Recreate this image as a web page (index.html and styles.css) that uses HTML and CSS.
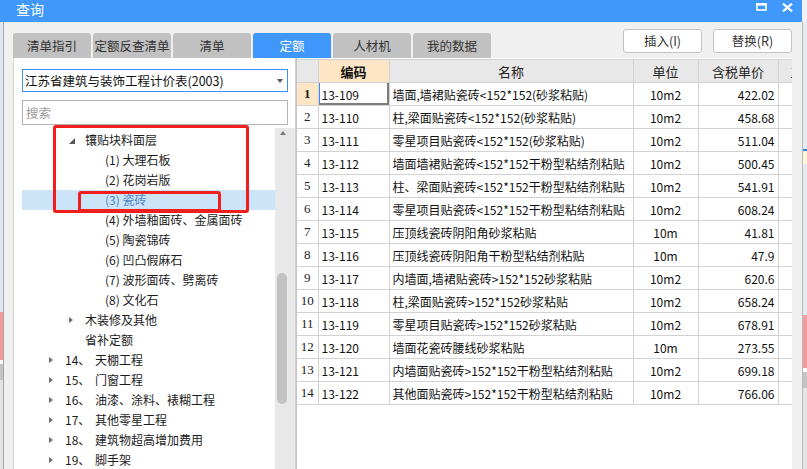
FILE: index.html
```html
<!DOCTYPE html>
<html lang="zh">
<head>
<meta charset="utf-8">
<title>查询</title>
<link rel="stylesheet" href="styles.css">
</head>
<body>
<div class="screen">
  <div class="titlerow">
    <div class="titlebar">
      <span class="title">查询</span>
      <div class="winbtns">
        <svg class="ico" width="11" height="8" viewBox="0 0 11 8"><rect x="1" y="1" width="9" height="6" fill="none" stroke="#fff" stroke-width="1.6"/><rect x="0.2" y="0.2" width="10.6" height="2.4" fill="#fff"/></svg>
        <svg class="ico" width="11" height="9" viewBox="0 0 11 9"><path d="M1 0.6 L10 8.4 M10 0.6 L1 8.4" stroke="#fff" stroke-width="2.1" fill="none"/></svg>
      </div>
    </div>
    <div class="corner"></div>
  </div>
  <div class="mainrow">
    <div class="strip strip-left">
      <div class="s-blue"></div>
      <div class="s-pink"></div>
      <div class="s-white"></div>
      <div class="s-gray"></div>
      <div class="s-rest"></div>
    </div>
    <div class="window">
      <div class="toolbar">
        <div class="tabs">
          <div class="tab">清单指引</div>
          <div class="tab">定额反查清单</div>
          <div class="tab">清单</div>
          <div class="tab active">定额</div>
          <div class="tab">人材机</div>
          <div class="tab">我的数据</div>
        </div>
        <div class="btns">
          <div class="btn">插入(I)</div>
          <div class="btn">替换(R)</div>
        </div>
      </div>
      <div class="content">
        <div class="leftpanel">
          <div class="dropdown"><span>江苏省建筑与装饰工程计价表(2003)</span><i class="dd-arrow"></i></div>
          <div class="search">搜索</div>
          <div class="treearea">
            <div class="treelist">
              <div class="row l2"><i class="tg"><b class="exp"></b></i><span>镶贴块料面层</span></div>
              <div class="row l3">(1) 大理石板</div>
              <div class="row l3">(2) 花岗岩版</div>
              <div class="row l3 sel">(3) 瓷砖</div>
              <div class="row l3">(4) 外墙釉面砖、金属面砖</div>
              <div class="row l3">(5) 陶瓷锦砖</div>
              <div class="row l3">(6) 凹凸假麻石</div>
              <div class="row l3">(7) 波形面砖、劈离砖</div>
              <div class="row l3">(8) 文化石</div>
              <div class="row l2"><i class="tg"><b class="col"></b></i><span>木装修及其他</span></div>
              <div class="row l2 leaf">省补定额</div>
              <div class="row l1"><i class="tg"><b class="col"></b></i><span class="num">14、</span><span>天棚工程</span></div>
              <div class="row l1"><i class="tg"><b class="col"></b></i><span class="num">15、</span><span>门窗工程</span></div>
              <div class="row l1"><i class="tg"><b class="col"></b></i><span class="num">16、</span><span>油漆、涂料、裱糊工程</span></div>
              <div class="row l1"><i class="tg"><b class="col"></b></i><span class="num">17、</span><span>其他零星工程</span></div>
              <div class="row l1"><i class="tg"><b class="col"></b></i><span class="num">18、</span><span>建筑物超高增加费用</span></div>
              <div class="row l1"><i class="tg"><b class="col"></b></i><span class="num">19、</span><span>脚手架</span></div>
            </div>
            <div class="vscroll">
              <i class="up-arrow"></i>
              <div class="thumb"></div>
            </div>
          </div>
          <div class="mark mark-big"></div>
          <div class="mark mark-small"></div>
        </div>
        <div class="tablewrap">
          <table class="grid">
            <colgroup><col class="c0"><col class="c1"><col class="c2"><col class="c3"><col class="c4"><col class="c5"></colgroup>
            <thead>
              <tr><th class="rn"></th><th class="hl">编码</th><th>名称</th><th>单位</th><th>含税单价</th><th class="cut"><span>工</span></th></tr>
            </thead>
            <tbody>
              <tr><td class="rn cur">1</td><td class="code sel">13-109</td><td class="nm">墙面,墙裙贴瓷砖&lt;152*152(砂浆粘贴)</td><td class="u">10m2</td><td class="p">422.02</td><td></td></tr>
              <tr><td class="rn">2</td><td class="code">13-110</td><td class="nm">柱,梁面贴瓷砖&lt;152*152(砂浆粘贴)</td><td class="u">10m2</td><td class="p">458.68</td><td></td></tr>
              <tr><td class="rn">3</td><td class="code">13-111</td><td class="nm">零星项目贴瓷砖&lt;152*152(砂浆粘贴)</td><td class="u">10m2</td><td class="p">511.04</td><td></td></tr>
              <tr><td class="rn">4</td><td class="code">13-112</td><td class="nm">墙面墙裙贴瓷砖&lt;152*152干粉型粘结剂粘贴</td><td class="u">10m2</td><td class="p">500.45</td><td></td></tr>
              <tr><td class="rn">5</td><td class="code">13-113</td><td class="nm">柱、梁面贴瓷砖&lt;152*152干粉型粘结剂粘贴</td><td class="u">10m2</td><td class="p">541.91</td><td></td></tr>
              <tr><td class="rn">6</td><td class="code">13-114</td><td class="nm">零星项目贴瓷砖&lt;152*152干粉型粘结剂粘贴</td><td class="u">10m2</td><td class="p">608.24</td><td></td></tr>
              <tr><td class="rn">7</td><td class="code">13-115</td><td class="nm">压顶线瓷砖阴阳角砂浆粘贴</td><td class="u">10m</td><td class="p">41.81</td><td></td></tr>
              <tr><td class="rn">8</td><td class="code">13-116</td><td class="nm">压顶线瓷砖阴阳角干粉型粘结剂粘贴</td><td class="u">10m</td><td class="p">47.9</td><td></td></tr>
              <tr><td class="rn">9</td><td class="code">13-117</td><td class="nm">内墙面,墙裙贴瓷砖&gt;152*152砂浆粘贴</td><td class="u">10m2</td><td class="p">620.6</td><td></td></tr>
              <tr><td class="rn">10</td><td class="code">13-118</td><td class="nm">柱,梁面贴瓷砖&gt;152*152砂浆粘贴</td><td class="u">10m2</td><td class="p">658.24</td><td></td></tr>
              <tr><td class="rn">11</td><td class="code">13-119</td><td class="nm">零星项目贴瓷砖&gt;152*152砂浆粘贴</td><td class="u">10m2</td><td class="p">678.91</td><td></td></tr>
              <tr><td class="rn">12</td><td class="code">13-120</td><td class="nm">墙面花瓷砖腰线砂浆粘贴</td><td class="u">10m</td><td class="p">273.55</td><td></td></tr>
              <tr><td class="rn">13</td><td class="code">13-121</td><td class="nm">内墙面贴瓷砖&gt;152*152干粉型粘结剂粘贴</td><td class="u">10m2</td><td class="p">699.18</td><td></td></tr>
              <tr><td class="rn">14</td><td class="code">13-122</td><td class="nm">其他面贴瓷砖&gt;152*152干粉型粘结剂粘贴</td><td class="u">10m2</td><td class="p">766.06</td><td></td></tr>
            </tbody>
          </table>
        </div>
      </div>
    </div>
    <div class="strip strip-right">
      <div class="r-a"></div>
      <div class="r-blue"></div>
      <div class="r-yellow"></div>
      <div class="r-b"></div>
      <div class="s-pink r-pink"></div>
      <div class="s-white"></div>
      <div class="s-gray"></div>
      <div class="s-rest"></div>
    </div>
  </div>
</div>
</body>
</html>
```
FILE: styles.css
```css
* { box-sizing: border-box; margin: 0; padding: 0; }
body {
  margin: 0;
  font-family: "Noto Sans CJK SC", "Microsoft YaHei", sans-serif;
  font-size: 12px;
  color: #1a1a1a;
  background: #e6ebf1;
  overflow: hidden;
}
.screen { width: 807px; height: 469px; display: flex; flex-direction: column; overflow: hidden; }

/* title bar */
.titlerow { display: flex; height: 22px; flex: none; }
.titlebar {
  width: 802px; background: #4198fb; color: #fff;
  display: flex; align-items: flex-start; padding-left: 16px; padding-right: 9px;
}
.title { font-size: 14px; line-height: 18px; }
.winbtns { margin-left: auto; margin-top: 3px; display: flex; gap: 15px; align-items: flex-start; }
.ico { display: block; }
.corner { flex: 1; background: #eef1f5; }

/* main row */
.mainrow { display: flex; flex: 1; min-height: 0; }
.strip { display: flex; flex-direction: column; }
.strip-left { width: 3px; flex: none; }
.strip-right { flex: 1; }
.s-blue { height: 290px; background: #dfe7f2; }
.s-pink { height: 48px; background: #f39c9c; }
.s-white { height: 4px; background: #fafafa; }
.s-gray { height: 16px; background: #c4c4c4; }
.s-rest { flex: 1; background: #e3e3e3; }
.r-a { height: 127px; background: #e6ebf1; }
.r-blue { height: 2px; background: #2f7fe0; }
.r-yellow { height: 13px; background: #fdf6d6; }
.r-b { height: 151px; background: #e6ebf1; }
.r-pink { height: 53px; }

.window {
  width: 800px; flex: none; background: #f0f0f0;
  border-left: 1px solid #a5a5a5; border-right: 1px solid #b9b9b9;
  display: flex; flex-direction: column; padding: 0 10px 0 9px;
}

/* toolbar */
.toolbar { height: 36px; flex: none; display: flex; align-items: flex-start; }
.tabs { display: flex; gap: 2px; align-self: flex-end; }
.tab {
  width: 78px; height: 25px; background: #c1c1c1; color: #333;
  border-radius: 3px 3px 0 0; text-align: center; line-height: 25px; font-size: 12.5px;
}
.tab.active { background: #3f97fb; color: #fff; }
.btns { margin-left: auto; margin-top: 7px; display: flex; gap: 11px; }
.btn {
  width: 79px; height: 24px; background: #fff; border: 1px solid #c3c3c3;
  border-radius: 3px; text-align: center; line-height: 22px; font-size: 12.5px; color: #333;
}

/* content */
.content { flex: 1; min-height: 0; display: flex; }
.leftpanel {
  width: 283px; flex: none; background: #fff; position: relative;
  border-left: 1px solid #d4d4d4; border-right: 1px solid #cfcfcf;
  display: flex; flex-direction: column; padding-top: 11px;
}
.dropdown {
  margin-left: 8px; width: 266px; height: 23px; border: 1px solid #3d93f5;
  display: flex; align-items: center; padding-left: 2px; padding-right: 4px;
  font-size: 12.5px; color: #111; white-space: nowrap;
}
.dd-arrow {
  margin-left: auto; width: 0; height: 0;
  border-top: 4px solid #555; border-left: 3px solid transparent; border-right: 3px solid transparent;
}
.search {
  margin-left: 8px; margin-top: 8px; width: 266px; height: 25px;
  border: 1px solid #b3b3b3; color: #9a9a9a; font-size: 12.5px; line-height: 23px; padding-left: 3px;
}
.treearea { margin-top: 3px; flex: 1; min-height: 0; display: flex; }
.treelist { flex: 1; margin-left: 8px; padding-top: 2px; overflow: hidden; }
.row { height: 20px; line-height: 20px; display: flex; align-items: center; white-space: nowrap; color: #1c1c1c; }
.row.l1 { padding-left: 27px; }
.row.l2 { padding-left: 47px; }
.row.l2.leaf { padding-left: 63px; }
.row.l3 { padding-left: 83px; }
.row.sel { background: #cce4f7; color: #4a84c8; }
.tg { width: 16px; flex: none; display: flex; align-items: center; height: 20px; }
.tg .exp { width: 0; height: 0; border-bottom: 6px solid #575757; border-left: 6px solid transparent; margin-top: 1px; }
.tg .col { width: 0; height: 0; border-left: 4px solid #6e6e6e; border-top: 3.5px solid transparent; border-bottom: 3.5px solid transparent; }
.num { width: 30px; flex: none; }
.vscroll { width: 20px; flex: none; background: #e8e8e8; display: flex; flex-direction: column; }
.up-arrow {
  margin: 3px 0 0 5px; width: 0; height: 0;
  border-bottom: 4px solid #7a7a7a; border-left: 3px solid transparent; border-right: 3px solid transparent;
}
.thumb { margin: 138px 0 0 2px; width: 10px; height: 131px; background: #c2c2c2; border-radius: 5px; }

.mark { position: absolute; border: 3px solid #f21d1d; border-radius: 3px; pointer-events: none; }
.mark-big { left: 39px; top: 67px; width: 196px; height: 88px; }
.mark-small { left: 64px; top: 133px; width: 143px; height: 21px; }

/* table */
.tablewrap { flex: 1; min-width: 0; background: #fff; border-left: 1px solid #c4c4c4; padding-top: 1px; overflow: hidden; }
.grid { width: 495px; border-collapse: collapse; table-layout: fixed; }
.c0 { width: 21px; } .c1 { width: 71px; } .c2 { width: 244px; } .c3 { width: 65px; } .c4 { width: 80px; } .c5 { width: 14px; }
.grid th, .grid td {
  border: 1px solid #d2d2d2; white-space: nowrap; overflow: hidden; padding: 0 3px;
}
.grid th:first-child, .grid td:first-child { border-left: 0; }
.grid th {
  height: 23px; background: #e8e8e8; font-weight: normal; font-size: 13px; color: #222; text-align: center;
}
.grid th.hl { background: #fde5c5; font-weight: bold; color: #111; }
.grid th.cut { text-align: left; padding-left: 12px; }
.grid td { height: 23px; font-size: 12px; color: #111; }
.grid td.rn { text-align: center; padding: 0; font-family: "Liberation Serif", serif; font-size: 13px; color: #222; }
.grid td.rn.cur { background: #fde5c5; font-weight: bold; }
.grid td.sel { box-shadow: inset -2px -2px 0 #7d7d7d, inset 1px 0 0 #3d8ee8; }
.grid td.u { text-align: center; }
.grid td.p { text-align: right; }
```
